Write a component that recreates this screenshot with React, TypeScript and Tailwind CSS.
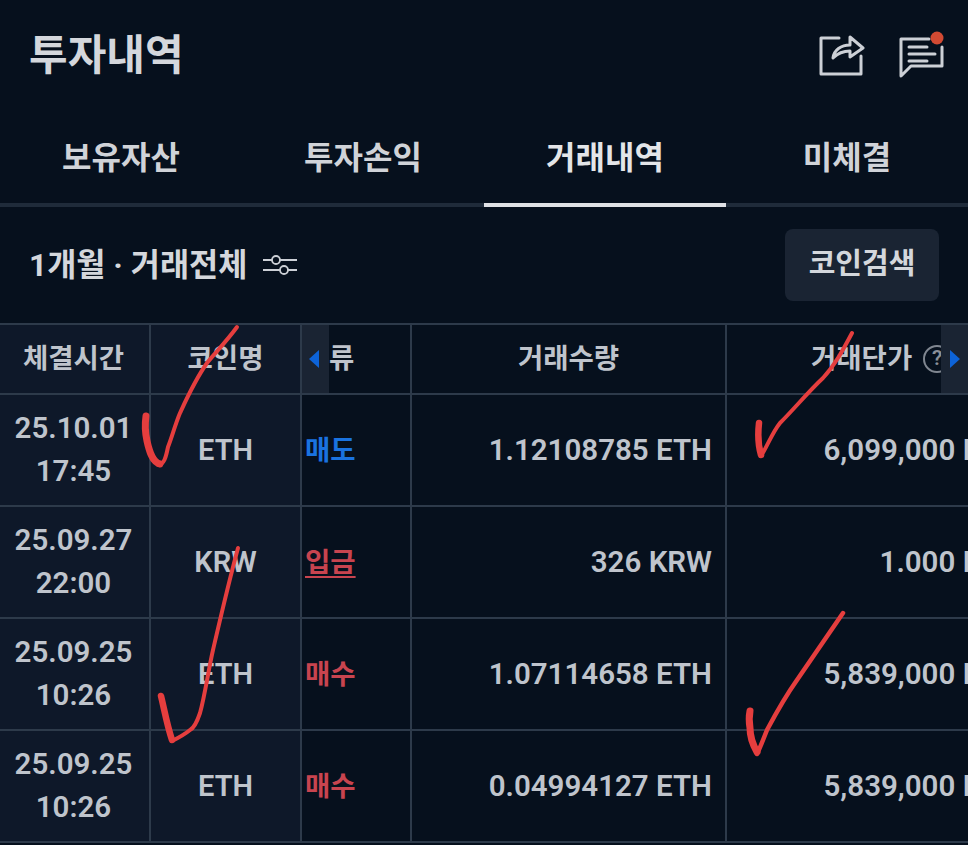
const font = { fontFamily: 'Roboto, "Noto Sans CJK KR", sans-serif' };

const rows = [
  { date: '25.10.01', time: '17:45', coin: 'ETH', kind: '매도', qty: '1.12108785 ETH', price: '6,099,000 KRW' },
  { date: '25.09.27', time: '22:00', coin: 'KRW', kind: '입금', qty: '326 KRW', price: '1.000 KRW' },
  { date: '25.09.25', time: '10:26', coin: 'ETH', kind: '매수', qty: '1.07114658 ETH', price: '5,839,000 KRW' },
  { date: '25.09.25', time: '10:26', coin: 'ETH', kind: '매수', qty: '0.04994127 ETH', price: '5,839,000 KRW' },
];

const tabs = ['보유자산', '투자손익', '거래내역', '미체결'];

function ShareIcon() {
  return (
    <svg width="46" height="44" viewBox="0 0 46 44" fill="none" stroke="#ccd0d6" strokeWidth="3" strokeLinejoin="round" strokeLinecap="round">
      <path d="M20 5H2v36h40V23" />
      <path d="M14 25c1-8 8-13 17-13V4l13 11-13 9v-6c-7 0-12 2-17 7z" />
    </svg>
  );
}

function ChatIcon() {
  return (
    <svg width="46" height="48" viewBox="0 0 46 48" fill="none" stroke="#ccd0d6" strokeWidth="3" strokeLinejoin="round" strokeLinecap="round">
      <path d="M30 8H2v37l10-10h31V16" />
      <path d="M10 16h18M10 23h26M10 30h18" />
      <circle cx="38" cy="7" r="6.5" fill="#d24a33" stroke="none" />
    </svg>
  );
}

function SliderIcon() {
  return (
    <svg width="34" height="22" viewBox="0 0 34 22" fill="none" stroke="#ccd0d6" strokeWidth="1.8">
      <path d="M0 6h9M17 6h17M0 16h17M25 16h9" />
      <circle cx="13" cy="6" r="4" />
      <circle cx="21" cy="16" r="4" />
    </svg>
  );
}

export default function App() {
  return (
    <div style={font} className="relative h-[845px] w-[968px] overflow-hidden bg-[#06101d] text-[#bfc4cc]">
      <header className="flex h-[110px] items-center justify-between pl-[29px] pr-[23px]">
        <h1 className="text-[42px] font-bold text-[#d4d7dc]">투자내역</h1>
        <div className="flex items-center gap-[34px]">
          <ShareIcon />
          <ChatIcon />
        </div>
      </header>

      <nav className="grid h-[97px] grid-cols-4 border-b-[4px] border-[#1f2b3a]">
        {tabs.map((t, i) => (
          <div
            key={t}
            className={
              'relative flex items-center justify-center pt-[3px] text-[32px] font-bold ' +
              (i === 2 ? 'text-[#e3e5e8]' : 'text-[#d0d3d8]')
            }
          >
            {t}
            {i === 2 && <span className="absolute inset-x-0 -bottom-[4px] h-[4px] bg-[#dfe1e5]" />}
          </div>
        ))}
      </nav>

      <div className="flex h-[116px] items-center justify-between pl-[29px] pr-[29px]">
        <div className="flex items-center gap-[16px]">
          <span className="pt-[1px] text-[31.7px] font-bold text-[#d4d7dc]">1개월 · 거래전체</span>
          <SliderIcon />
        </div>
        <button className="flex h-[72px] w-[154px] items-center justify-center rounded-lg bg-[#1a2433] text-[29px] font-bold text-[#d4d7dc]">
          코인검색
        </button>
      </div>

      <div className="relative grid grid-cols-[151px_151px_110px_315px_300px] border-t-2 border-[#2d3a4a]">
        <div className="flex h-[70px] items-center justify-center border-r-2 border-b-2 border-[#2d3a4a] bg-[#0e1829] pr-[2px] text-[27.5px] font-semibold">체결시간</div>
        <div className="flex h-[70px] items-center justify-center border-r-2 border-b-2 border-[#2d3a4a] bg-[#0e1829] text-[27.5px] font-semibold">코인명</div>
        <div className="flex h-[70px] items-center border-r-2 border-b-2 border-[#2d3a4a] pl-[27px] text-[27.5px] font-semibold">류</div>
        <div className="flex h-[70px] items-center justify-center border-r-2 border-b-2 border-[#2d3a4a] text-[27.5px] font-semibold">거래수량</div>
        <div className="flex h-[70px] items-center gap-[11px] border-b-2 border-[#2d3a4a] pl-[84px] text-[27.5px] font-semibold">
          거래단가
          <span className="flex h-[28px] w-[28px] shrink-0 items-center justify-center rounded-full border-2 border-[#7f8690] text-[21px] text-[#8a9099]">?</span>
        </div>

        {rows.map((r, i) => (
          <div key={i} className="contents">
            <div className="flex h-[112px] flex-col items-center justify-center border-r-2 border-b-2 border-[#2d3a4a] bg-[#0e1829] pr-[2px] text-[29.5px] leading-[43px] font-semibold">
              <span>{r.date}</span>
              <span>{r.time}</span>
            </div>
            <div className="flex h-[112px] items-center justify-center border-r-2 border-b-2 border-[#2d3a4a] bg-[#0e1829] pt-[2px] text-[29px] font-semibold">{r.coin}</div>
            <div className="flex h-[112px] items-center border-r-2 border-b-2 border-[#2d3a4a] pl-[3px] pt-[1px] text-[27.5px] font-bold">
              <span className={r.kind === '매도' ? 'text-[#1a73e0]' : r.kind === '입금' ? 'text-[#c8444f] underline underline-offset-4' : 'text-[#c8444f]'}>{r.kind}</span>
            </div>
            <div className="flex h-[112px] items-center justify-end border-r-2 border-b-2 border-[#2d3a4a] pr-[13px] pt-[1px] text-[29.5px] font-semibold">{r.qty}</div>
            <div className="flex h-[112px] items-center justify-end border-b-2 border-[#2d3a4a] pr-[1px] pt-[1px] text-[29.5px] font-semibold whitespace-nowrap">{r.price}</div>
          </div>
        ))}

        <div className="absolute left-[302px] top-0 flex h-[68px] w-[27px] items-center justify-center bg-[#1a2433] pr-[4px]">
          <span className="h-0 w-0 border-y-[9px] border-r-[10px] border-y-transparent border-r-[#0d63d8]" />
        </div>
        <div className="absolute left-[941px] top-0 flex h-[68px] w-[27px] items-center justify-center bg-[#1a2433]">
          <span className="h-0 w-0 border-y-[9px] border-l-[10px] border-y-transparent border-l-[#0d63d8]" />
        </div>
      </div>

      <svg className="absolute inset-0" width="968" height="845" fill="none" stroke="#e53e3e" strokeLinecap="round" strokeLinejoin="round">
        <path strokeWidth="4" d="M237 327C226 342 215 353 207 363C195 380 186 400 180 413C175 425 172 437 168 447C166 457 164 465 158 465" />
        <path strokeWidth="7" d="M160 464C152 462 149 450 147 441C145 432 145 423 146 416" />
        <path strokeWidth="4" d="M852 333C843 350 835 365 823 378C808 392 795 408 780 423C772 433 767 447 761 456" />
        <path strokeWidth="6.5" d="M761 455C758 445 758 432 759 423" />
        <path strokeWidth="4" d="M238 548C228 585 220 620 213 650C208 672 205 695 200 713C197 722 194 728 190 730C184 735 178 738 172 741" />
        <path strokeWidth="6.5" d="M172 740C167 725 164 708 161 696" />
        <path strokeWidth="4.5" d="M843 613C828 635 812 658 797 680C785 697 775 715 767 730C763 740 760 748 757 754" />
        <path strokeWidth="7" d="M757 752C753 745 750 735 750 728C749 722 749 716 750 711" />
      </svg>
    </div>
  );
}
